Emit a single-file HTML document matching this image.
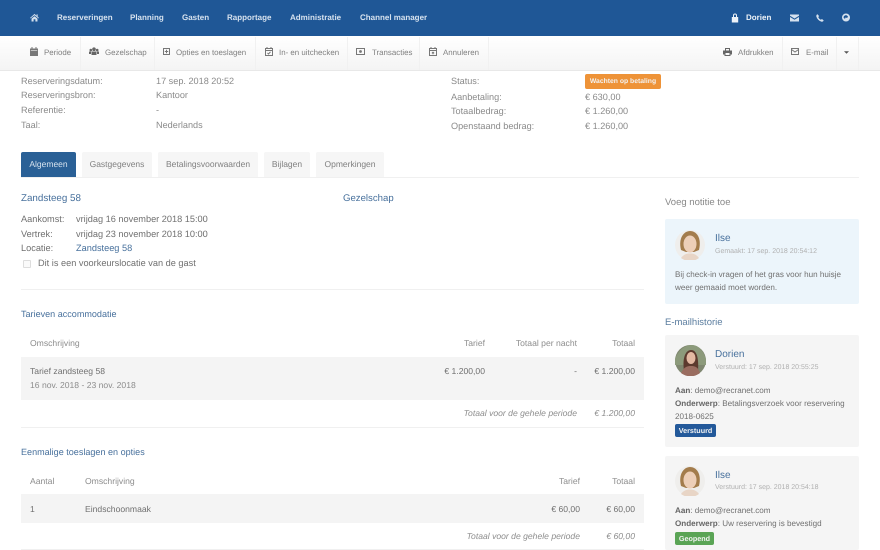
<!DOCTYPE html>
<html lang="nl"><head><meta charset="utf-8"><title>Reservering</title>
<style>
html,body{margin:0;padding:0;background:#fff}
body{width:880px;height:550px;overflow:hidden;position:relative;font-family:"Liberation Sans",sans-serif;color:#707070;font-size:9.200px;text-rendering:geometricPrecision}
.a{position:absolute}
.t{position:absolute;white-space:nowrap;line-height:14px}
.r{text-align:right}
.n{color:#d5e1ee;font-size:8px;font-weight:bold;top:11px}
.b{color:#808080;font-size:7.900px;top:46px}
.l{color:#8a8a8a;font-size:9.150px}
.h{color:#47709c}
.tab{position:absolute;top:152px;height:25px;background:#f6f6f6;border-radius:2px 2px 0 0;text-align:center;line-height:25px;font-size:8.500px;color:#808080}
.sep{position:absolute;top:37px;width:1px;height:33px;background:#f1f1f1}
.box{position:absolute;background:#f5f5f5;border-radius:2px}
.hr{position:absolute;height:1px;background:#f0f0f0}
.i{position:absolute;fill:none;stroke:#777;stroke-width:1}
.w{position:absolute;fill:#d5e1ee}
.m{font-size:7px;color:#b0b0b0}
.lab{position:absolute;color:#f3f3f3;font-weight:bold;font-size:7.200px;text-align:center;border-radius:2px;white-space:nowrap}
.s{font-size:8.600px}
.q{font-size:9.050px}
.g{color:#8d8d8d}
.e{font-size:8.100px}
b{color:#666}
</style></head><body>

<div class="a" style="left:0;top:0;width:880px;height:36px;background:#1f5796"></div>
<div class="a" style="left:0;top:36px;width:880px;height:35px;background:linear-gradient(#fff,#f4f4f4);border-bottom:1px solid #e8e8e8;box-sizing:border-box"></div>

<svg class="w" style="left:30px;top:13px" width="9" height="9" viewBox="0 0 10 10"><path d="M5 1 0 5.500.7 6 5 2.500 9.300 6 10 5.500 8.500 4V1.500H7.300V3ZM1.700 6.300V9.500H4V7H6V9.500H8.300V6.300L5 3.600Z"/></svg>
<span class="t n" style="left:57px">Reserveringen</span>
<span class="t n" style="left:130px">Planning</span>
<span class="t n" style="left:182px">Gasten</span>
<span class="t n" style="left:227px">Rapportage</span>
<span class="t n" style="left:290px">Administratie</span>
<span class="t n" style="left:360px">Channel manager</span>

<svg class="w" style="left:731px;top:13px;fill:#eef3f8" width="8" height="10" viewBox="0 0 8 10"><path d="M2 4V2.500a2 2 0 0 1 4 0V4H5V2.500a1 1 0 0 0-2 0V4ZM.8 4H7.200V9.500H.8Z"/></svg>
<span class="t n" style="left:746px;color:#eef3f8">Dorien</span>
<svg class="w" style="left:790px;top:14px" width="9" height="8" viewBox="0 0 9 8"><path d="M0 .5H9V1.800L4.500 4.500 0 1.800ZM0 3 4.500 5.700 9 3V7.500H0Z"/></svg>
<svg class="w" style="left:816px;top:13.500px" width="8" height="8" viewBox="0 0 8 8"><path d="M1.500.3 3 2 2.300 3.200C2.800 4.300 3.700 5.200 4.800 5.700L6 5 7.700 6.500C7.300 7.500 6.300 7.900 5.300 7.600 2.900 6.800 1.200 5.100.4 2.700.1 1.700.5.700 1.500.3Z"/></svg>
<svg class="w" style="left:842px;top:13px" width="8" height="9" viewBox="0 0 8 8"><path fill-rule="evenodd" d="M4 0a4 4 0 1 0 0 8 4 4 0 0 0 0-8ZM2 2.500 4 1.500 6 2.800 5.200 4.500 3.500 4 3 5.500 1.500 4Z"/></svg>

<div class="sep" style="left:80px"></div><div class="sep" style="left:154px"></div><div class="sep" style="left:255px"></div><div class="sep" style="left:347px"></div><div class="sep" style="left:419px"></div><div class="sep" style="left:488px"></div><div class="sep" style="left:782px"></div><div class="sep" style="left:836px"></div><div class="sep" style="left:858px"></div>

<svg class="i" style="left:30px;top:47px" width="8" height="9" viewBox="0 0 8 9"><path fill="#777" stroke="none" d="M0 1.500H8V9H0ZM1.500 0H2.500V1.500H1.500ZM5.500 0H6.500V1.500H5.500Z"/><path stroke="#f5f5f5" stroke-width=".6" d="M.8 3.500H7.200"/></svg>
<span class="t b" style="left:44px">Periode</span>
<svg class="i" style="left:89px;top:47px" width="10" height="9" viewBox="0 0 10 9"><g fill="#666" stroke="none"><circle cx="5" cy="2.200" r="1.800"/><circle cx="1.800" cy="3" r="1.300"/><circle cx="8.200" cy="3" r="1.300"/><path d="M2.500 4.500H7.500V8H2.500ZM0 4.500H2V7H0ZM8 4.500H10V7H8Z"/></g></svg>
<span class="t b" style="left:105px">Gezelschap</span>
<svg class="i" style="left:163px;top:48px" width="7" height="7" viewBox="0 0 7 7"><path d="M.5.500H6.500V6.500H.5ZM3.500 1.800V5.200M1.800 3.500H5.200"/></svg>
<span class="t b" style="left:176px">Opties en toeslagen</span>
<svg class="i" style="left:265px;top:47px" width="8" height="9" viewBox="0 0 8 9"><path d="M.5 1.500H7.500V8.500H.5ZM.5 3.500H7.500M2 0V2M6 0V2M2.500 6 3.500 7 5.500 4.800"/></svg>
<span class="t b" style="left:279px">In- en uitchecken</span>
<svg class="i" style="left:356px;top:48px" width="9" height="7" viewBox="0 0 9 7"><path fill="#777" stroke="none" fill-rule="evenodd" d="M0 0H9V7H0ZM1 1V6H8V1Z"/><circle cx="4.500" cy="3.500" r="1.400" fill="#777" stroke="none"/></svg>
<span class="t b" style="left:372px">Transacties</span>
<svg class="i" style="left:429px;top:47px" width="8" height="9" viewBox="0 0 8 9"><path d="M.5 1.500H7.500V8.500H.5ZM.5 3.500H7.500M2 0V2M6 0V2M3 5 5 7M5 5 3 7"/></svg>
<span class="t b" style="left:443px">Annuleren</span>
<svg class="i" style="left:723px;top:48px" width="9" height="8" viewBox="0 0 9 8"><path fill="#666" stroke="none" fill-rule="evenodd" d="M2 0H7V2.500H9V6.500H7.500V8H1.500V6.500H0V2.500H2ZM3 1V2.500H6V1ZM2.500 5V7H6.500V5Z"/></svg>
<span class="t b" style="left:738px">Afdrukken</span>
<svg class="i" style="left:791px;top:48px" width="8" height="7" viewBox="0 0 8 7"><path d="M.5.500H7.500V6.500H.5ZM.5 1.500 4 4 7.500 1.500"/></svg>
<span class="t b" style="left:806px">E-mail</span>
<svg class="a" style="left:844px;top:51px" width="5" height="3" viewBox="0 0 6 3"><path fill="#555" d="M0 0H6L3 3Z"/></svg>

<span class="t l" style="left:21px;top:74px">Reserveringsdatum:</span><span class="t l" style="left:156px;top:74px">17 sep. 2018 20:52</span>
<span class="t l" style="left:21px;top:88px">Reserveringsbron:</span><span class="t l" style="left:156px;top:88px">Kantoor</span>
<span class="t l" style="left:21px;top:103px">Referentie:</span><span class="t l" style="left:156px;top:103px">-</span>
<span class="t l" style="left:21px;top:118px">Taal:</span><span class="t l" style="left:156px;top:118px">Nederlands</span>
<span class="t l" style="left:451px;top:74px">Status:</span>
<span class="lab" style="left:585px;top:74px;width:76px;height:15px;line-height:15px;background:#ee9338;font-size:6.800px">Wachten op betaling</span>
<span class="t l" style="left:451px;top:90px">Aanbetaling:</span><span class="t l" style="left:585px;top:90px">€ 630,00</span>
<span class="t l" style="left:451px;top:104px">Totaalbedrag:</span><span class="t l" style="left:585px;top:104px">€ 1.260,00</span>
<span class="t l" style="left:451px;top:119px">Openstaand bedrag:</span><span class="t l" style="left:585px;top:119px">€ 1.260,00</span>

<div class="hr" style="left:21px;top:177px;width:838px"></div>
<div class="tab" style="left:21px;width:55px;background:#2a6096;color:#d6e2ee">Algemeen</div>
<div class="tab" style="left:82px;width:70px">Gastgegevens</div>
<div class="tab" style="left:158px;width:100px">Betalingsvoorwaarden</div>
<div class="tab" style="left:264px;width:46px">Bijlagen</div>
<div class="tab" style="left:316px;width:68px">Opmerkingen</div>

<span class="t h" style="left:21px;top:192px;font-size:9.800px">Zandsteeg 58</span>
<span class="t h" style="left:343px;top:192px;font-size:9.600px">Gezelschap</span>
<span class="t" style="left:21px;top:212px">Aankomst:</span><span class="t" style="left:76px;top:212px">vrijdag 16 november 2018 15:00</span>
<span class="t" style="left:21px;top:227px">Vertrek:</span><span class="t" style="left:76px;top:227px">vrijdag 23 november 2018 10:00</span>
<span class="t" style="left:21px;top:241px">Locatie:</span><span class="t h" style="left:76px;top:241px">Zandsteeg 58</span>
<div class="a" style="left:23px;top:260px;width:6px;height:6px;border:1px solid #ddd;border-radius:1px;background:#fafafa"></div>
<span class="t" style="left:38px;top:256px">Dit is een voorkeurslocatie van de gast</span>
<div class="hr" style="left:21px;top:289px;width:623px"></div>

<span class="t h q" style="left:21px;top:307px">Tarieven accommodatie</span>
<span class="t g s" style="left:30px;top:336px">Omschrijving</span>
<span class="t r g s" style="right:395px;top:336px">Tarief</span>
<span class="t r g s" style="right:303px;top:336px">Totaal per nacht</span>
<span class="t r g s" style="right:245px;top:336px">Totaal</span>
<div class="a" style="left:21px;top:357px;width:623px;height:43px;background:#f4f4f4"></div>
<span class="t s" style="left:30px;top:364px">Tarief zandsteeg 58</span>
<span class="t g s" style="left:30px;top:378px">16 nov. 2018 - 23 nov. 2018</span>
<span class="t r s" style="right:395px;top:364px">€ 1.200,00</span>
<span class="t r s" style="right:303px;top:364px">-</span>
<span class="t r s" style="right:245px;top:364px">€ 1.200,00</span>
<span class="t r g s" style="right:303px;top:406px;font-style:italic">Totaal voor de gehele periode</span>
<span class="t r g s" style="right:245px;top:406px;font-style:italic">€ 1.200,00</span>
<div class="hr" style="left:21px;top:427px;width:623px"></div>

<span class="t h q" style="left:21px;top:445px">Eenmalige toeslagen en opties</span>
<span class="t g s" style="left:30px;top:474px">Aantal</span>
<span class="t g s" style="left:85px;top:474px">Omschrijving</span>
<span class="t r g s" style="right:300px;top:474px">Tarief</span>
<span class="t r g s" style="right:245px;top:474px">Totaal</span>
<div class="a" style="left:21px;top:494px;width:623px;height:29px;background:#f4f4f4"></div>
<span class="t s" style="left:30px;top:502px">1</span>
<span class="t s" style="left:85px;top:502px">Eindschoonmaak</span>
<span class="t r s" style="right:300px;top:502px">€ 60,00</span>
<span class="t r s" style="right:245px;top:502px">€ 60,00</span>
<span class="t r g s" style="right:300px;top:529px;font-style:italic">Totaal voor de gehele periode</span>
<span class="t r g s" style="right:245px;top:529px;font-style:italic">€ 60,00</span>
<div class="hr" style="left:21px;top:549px;width:623px"></div>

<span class="t" style="left:665px;top:196px;font-size:9.500px;color:#888">Voeg notitie toe</span>
<div class="box" style="left:665px;top:219px;width:194px;height:85px;background:#ecf5fb"></div>
<svg class="a" style="left:675px;top:230px" width="30" height="30" viewBox="0 0 30 30"><circle cx="15" cy="15" r="15" fill="#efeeec"/><path d="M6 20C3 8 9 1 15 1s12 6 9 19l-5 2H11Z" fill="#a37c4c"/><ellipse cx="15" cy="14" rx="6.500" ry="8.500" fill="#edcfb8"/><path d="M6 28C9 24 12 23.500 15 23.500s6 .5 9 4.500a15 15 0 0 1-18 0Z" fill="#e8d5c6"/></svg>
<span class="t h" style="left:715px;top:232px;font-size:10px">Ilse</span>
<span class="t m" style="left:715px;top:245px">Gemaakt: 17 sep. 2018 20:54:12</span>
<span class="t e" style="left:675px;top:268px">Bij check-in vragen of het gras voor hun huisje</span>
<span class="t e" style="left:675px;top:281px">weer gemaaid moet worden.</span>

<span class="t" style="left:665px;top:316px;font-size:9.500px;color:#5b7d9f">E-mailhistorie</span>
<div class="box" style="left:665px;top:335px;width:194px;height:112px"></div>
<svg class="a" style="left:675px;top:345px" width="31" height="31" viewBox="0 0 31 31"><circle cx="15.500" cy="15.500" r="15.500" fill="#7f8770"/><path d="M0 14C4 4 11 0 17 0s11 5 14 14v6H0Z" fill="#8c9a7b"/><path d="M9 26C7 12 11 5 16 5s8 6 7 21Z" fill="#5c3a2e"/><ellipse cx="16" cy="13" rx="4.500" ry="6" fill="#e3b9a2"/><path d="M6 28C9 22 12 21 16 21s7 1 9 7a15.500 15.500 0 0 1-19 0Z" fill="#9a6d60"/></svg>
<span class="t h" style="left:715px;top:348px;font-size:10px">Dorien</span>
<span class="t m" style="left:715px;top:361px">Verstuurd: 17 sep. 2018 20:55:25</span>
<span class="t e" style="left:675px;top:384px"><b>Aan</b>: demo@recranet.com</span>
<span class="t e" style="left:675px;top:397px"><b>Onderwerp</b>: Betalingsverzoek voor reservering</span>
<span class="t e" style="left:675px;top:410px">2018-0625</span>
<span class="lab" style="left:675px;top:424px;width:41px;height:13px;line-height:13px;background:#23599a">Verstuurd</span>

<div class="box" style="left:665px;top:456px;width:194px;height:94px"></div>
<svg class="a" style="left:675px;top:466px" width="30" height="30" viewBox="0 0 30 30"><circle cx="15" cy="15" r="15" fill="#efeeec"/><path d="M6 20C3 8 9 1 15 1s12 6 9 19l-5 2H11Z" fill="#a37c4c"/><ellipse cx="15" cy="14" rx="6.500" ry="8.500" fill="#edcfb8"/><path d="M6 28C9 24 12 23.500 15 23.500s6 .5 9 4.500a15 15 0 0 1-18 0Z" fill="#e8d5c6"/></svg>
<span class="t h" style="left:715px;top:469px;font-size:10px">Ilse</span>
<span class="t m" style="left:715px;top:481px">Verstuurd: 17 sep. 2018 20:54:18</span>
<span class="t e" style="left:675px;top:504px"><b>Aan</b>: demo@recranet.com</span>
<span class="t e" style="left:675px;top:517px"><b>Onderwerp</b>: Uw reservering is bevestigd</span>
<span class="lab" style="left:675px;top:532px;width:39px;height:13px;line-height:13px;background:#5aa455">Geopend</span>

</body></html>
